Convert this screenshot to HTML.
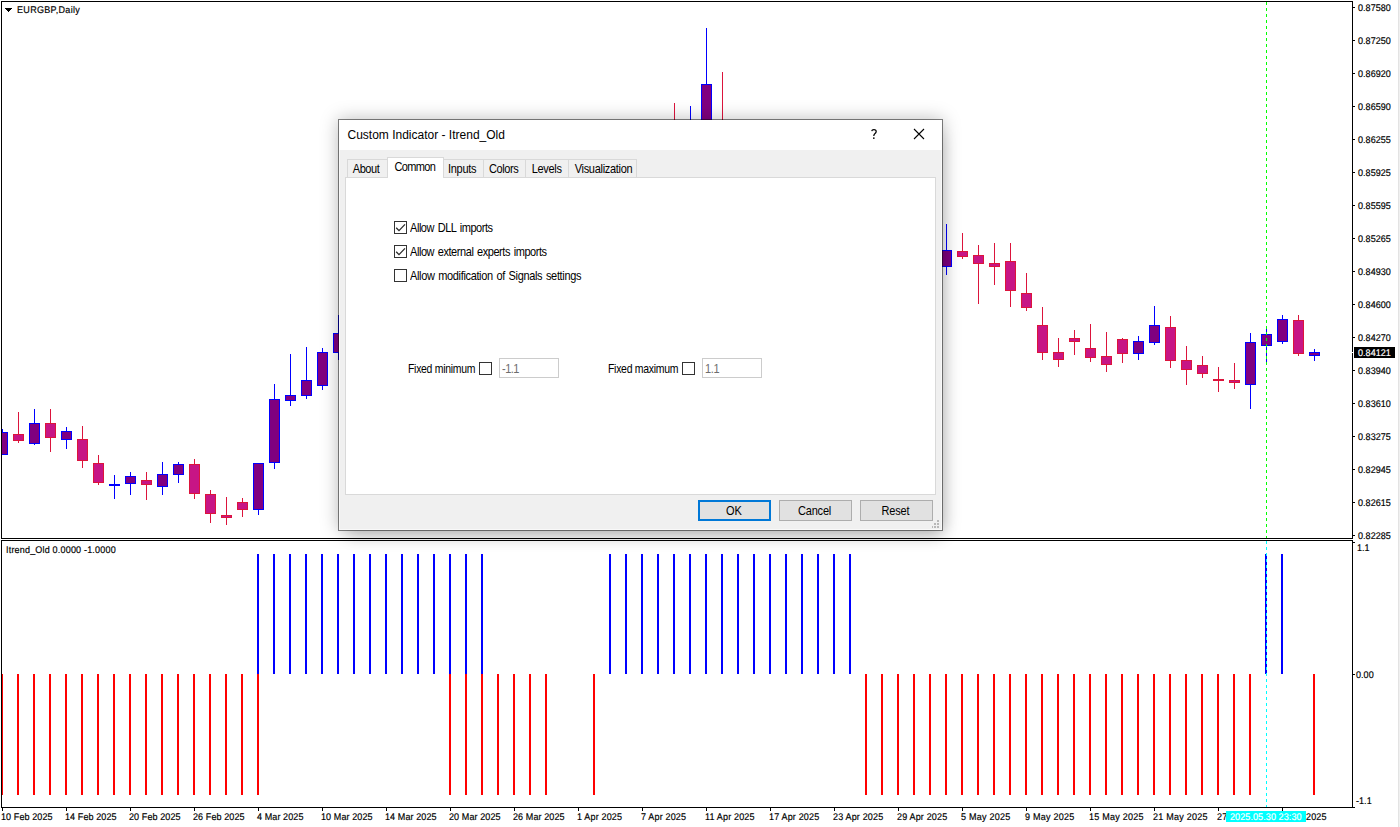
<!DOCTYPE html>
<html><head><meta charset="utf-8"><title>EURGBP,Daily</title>
<style>
html,body{margin:0;padding:0;background:#fff;}
body{width:1400px;height:827px;position:relative;overflow:hidden;font-family:"Liberation Sans",sans-serif;}
.t{position:absolute;white-space:pre;font-family:"Liberation Sans",sans-serif;}
.s{-webkit-text-stroke:0.18px currentColor;}
#chart{position:absolute;left:0;top:0;}
.abs{position:absolute;}
#dlg{position:absolute;left:338px;top:119px;width:603px;height:410px;border:1px solid rgba(0,0,0,0.48);background:#f0f0f0;background-clip:padding-box;box-shadow:0 0 17px rgba(0,0,0,0.26),5px 12px 15px -6px rgba(0,0,0,0.15);}
#dlg .title{position:absolute;left:0;top:0;width:603px;height:30px;background:#fff;}
#dlg .panel{position:absolute;left:6px;top:57px;width:589px;height:316px;border:1px solid #d9d9d9;background:#fff;}
.tab{position:absolute;top:39px;height:18px;border:1px solid #d9d9d9;border-bottom:none;background:#f0f0f0;box-sizing:border-box;}
.tab.sel{top:37px;height:21px;background:#fff;z-index:2;}
.cb{position:absolute;width:11px;height:11px;border:1px solid #333;background:#fff;}
.inp{position:absolute;width:58px;height:18px;border:1px solid #ccc;background:#fff;}
.btn{position:absolute;top:380px;width:71px;height:19px;border:1px solid #adadad;background:#e1e1e1;}
.btn.def{border:2px solid #0078d7;width:69px;height:17px;}
</style></head><body>

<svg id="chart" width="1400" height="827" viewBox="0 0 1400 827" shape-rendering="crispEdges">
<rect x="1" y="1" width="1352" height="1" fill="#000"/>
<rect x="1" y="1" width="1" height="538" fill="#000"/>
<rect x="1" y="538" width="1352" height="1" fill="#000"/>
<rect x="1" y="540" width="1352" height="1" fill="#000"/>
<rect x="1" y="540" width="1" height="268" fill="#000"/>
<rect x="1" y="807" width="1354" height="1" fill="#000"/>
<rect x="1352" y="1" width="1" height="538" fill="#000"/>
<rect x="1352" y="540" width="1" height="268" fill="#000"/>
<rect x="1398" y="0" width="1" height="827" fill="#e3e3e3"/>
<rect x="1399" y="0" width="1" height="827" fill="#f0f0f0"/>
<rect x="1353" y="7" width="2" height="1" fill="#000"/>
<rect x="1353" y="40" width="2" height="1" fill="#000"/>
<rect x="1353" y="73" width="2" height="1" fill="#000"/>
<rect x="1353" y="106" width="2" height="1" fill="#000"/>
<rect x="1353" y="139" width="2" height="1" fill="#000"/>
<rect x="1353" y="172" width="2" height="1" fill="#000"/>
<rect x="1353" y="205" width="2" height="1" fill="#000"/>
<rect x="1353" y="238" width="2" height="1" fill="#000"/>
<rect x="1353" y="271" width="2" height="1" fill="#000"/>
<rect x="1353" y="304" width="2" height="1" fill="#000"/>
<rect x="1353" y="337" width="2" height="1" fill="#000"/>
<rect x="1353" y="370" width="2" height="1" fill="#000"/>
<rect x="1353" y="403" width="2" height="1" fill="#000"/>
<rect x="1353" y="436" width="2" height="1" fill="#000"/>
<rect x="1353" y="469" width="2" height="1" fill="#000"/>
<rect x="1353" y="502" width="2" height="1" fill="#000"/>
<rect x="1353" y="535" width="2" height="1" fill="#000"/>
<rect x="1353" y="542" width="2" height="1" fill="#000"/>
<rect x="1353" y="674" width="2" height="1" fill="#000"/>
<rect x="2" y="808" width="1" height="3" fill="#000"/>
<rect x="66" y="808" width="1" height="3" fill="#000"/>
<rect x="130" y="808" width="1" height="3" fill="#000"/>
<rect x="194" y="808" width="1" height="3" fill="#000"/>
<rect x="258" y="808" width="1" height="3" fill="#000"/>
<rect x="322" y="808" width="1" height="3" fill="#000"/>
<rect x="386" y="808" width="1" height="3" fill="#000"/>
<rect x="450" y="808" width="1" height="3" fill="#000"/>
<rect x="514" y="808" width="1" height="3" fill="#000"/>
<rect x="578" y="808" width="1" height="3" fill="#000"/>
<rect x="642" y="808" width="1" height="3" fill="#000"/>
<rect x="706" y="808" width="1" height="3" fill="#000"/>
<rect x="770" y="808" width="1" height="3" fill="#000"/>
<rect x="834" y="808" width="1" height="3" fill="#000"/>
<rect x="898" y="808" width="1" height="3" fill="#000"/>
<rect x="962" y="808" width="1" height="3" fill="#000"/>
<rect x="1026" y="808" width="1" height="3" fill="#000"/>
<rect x="1090" y="808" width="1" height="3" fill="#000"/>
<rect x="1154" y="808" width="1" height="3" fill="#000"/>
<rect x="1218" y="808" width="1" height="3" fill="#000"/>
<rect x="1282" y="808" width="1" height="3" fill="#000"/>
<rect x="2" y="429" width="1" height="26" fill="#0000ff"/>
<rect x="2" y="432" width="6" height="23" fill="#0000ff"/>
<rect x="2" y="433" width="5" height="21" fill="#800080"/>
<rect x="18" y="412" width="1" height="31" fill="#dc143c"/>
<rect x="13" y="434" width="11" height="7" fill="#dc143c"/>
<rect x="14" y="435" width="9" height="5" fill="#c71585"/>
<rect x="34" y="409" width="1" height="36" fill="#0000ff"/>
<rect x="29" y="423" width="11" height="21" fill="#0000ff"/>
<rect x="30" y="424" width="9" height="19" fill="#800080"/>
<rect x="50" y="409" width="1" height="43" fill="#dc143c"/>
<rect x="45" y="423" width="11" height="15" fill="#dc143c"/>
<rect x="46" y="424" width="9" height="13" fill="#c71585"/>
<rect x="66" y="427" width="1" height="22" fill="#0000ff"/>
<rect x="61" y="431" width="11" height="9" fill="#0000ff"/>
<rect x="62" y="432" width="9" height="7" fill="#800080"/>
<rect x="82" y="426" width="1" height="42" fill="#dc143c"/>
<rect x="77" y="439" width="11" height="22" fill="#dc143c"/>
<rect x="78" y="440" width="9" height="20" fill="#c71585"/>
<rect x="98" y="455" width="1" height="30" fill="#dc143c"/>
<rect x="93" y="463" width="11" height="20" fill="#dc143c"/>
<rect x="94" y="464" width="9" height="18" fill="#c71585"/>
<rect x="114" y="475" width="1" height="24" fill="#0000ff"/>
<rect x="109" y="484" width="11" height="2" fill="#0000ff"/>
<rect x="130" y="472" width="1" height="23" fill="#0000ff"/>
<rect x="125" y="476" width="11" height="8" fill="#0000ff"/>
<rect x="126" y="477" width="9" height="6" fill="#800080"/>
<rect x="146" y="472" width="1" height="28" fill="#dc143c"/>
<rect x="141" y="480" width="11" height="5" fill="#dc143c"/>
<rect x="142" y="481" width="9" height="3" fill="#c71585"/>
<rect x="162" y="462" width="1" height="33" fill="#0000ff"/>
<rect x="157" y="474" width="11" height="13" fill="#0000ff"/>
<rect x="158" y="475" width="9" height="11" fill="#800080"/>
<rect x="178" y="462" width="1" height="21" fill="#0000ff"/>
<rect x="173" y="464" width="11" height="11" fill="#0000ff"/>
<rect x="174" y="465" width="9" height="9" fill="#800080"/>
<rect x="194" y="459" width="1" height="40" fill="#dc143c"/>
<rect x="189" y="464" width="11" height="30" fill="#dc143c"/>
<rect x="190" y="465" width="9" height="28" fill="#c71585"/>
<rect x="210" y="490" width="1" height="33" fill="#dc143c"/>
<rect x="205" y="494" width="11" height="20" fill="#dc143c"/>
<rect x="206" y="495" width="9" height="18" fill="#c71585"/>
<rect x="226" y="497" width="1" height="28" fill="#dc143c"/>
<rect x="221" y="515" width="11" height="3" fill="#dc143c"/>
<rect x="222" y="516" width="9" height="1" fill="#c71585"/>
<rect x="242" y="498" width="1" height="19" fill="#dc143c"/>
<rect x="237" y="502" width="11" height="8" fill="#dc143c"/>
<rect x="238" y="503" width="9" height="6" fill="#c71585"/>
<rect x="258" y="463" width="1" height="52" fill="#0000ff"/>
<rect x="253" y="463" width="11" height="47" fill="#0000ff"/>
<rect x="254" y="464" width="9" height="45" fill="#800080"/>
<rect x="274" y="384" width="1" height="85" fill="#0000ff"/>
<rect x="269" y="399" width="11" height="64" fill="#0000ff"/>
<rect x="270" y="400" width="9" height="62" fill="#800080"/>
<rect x="290" y="354" width="1" height="52" fill="#0000ff"/>
<rect x="285" y="395" width="11" height="6" fill="#0000ff"/>
<rect x="286" y="396" width="9" height="4" fill="#800080"/>
<rect x="306" y="347" width="1" height="52" fill="#0000ff"/>
<rect x="301" y="380" width="11" height="16" fill="#0000ff"/>
<rect x="302" y="381" width="9" height="14" fill="#800080"/>
<rect x="322" y="348" width="1" height="42" fill="#0000ff"/>
<rect x="317" y="352" width="11" height="34" fill="#0000ff"/>
<rect x="318" y="353" width="9" height="32" fill="#800080"/>
<rect x="338" y="315" width="1" height="45" fill="#0000ff"/>
<rect x="333" y="333" width="11" height="20" fill="#0000ff"/>
<rect x="334" y="334" width="9" height="18" fill="#800080"/>
<rect x="674" y="103" width="1" height="47" fill="#dc143c"/>
<rect x="669" y="125" width="11" height="15" fill="#dc143c"/>
<rect x="670" y="126" width="9" height="13" fill="#c71585"/>
<rect x="690" y="106" width="1" height="44" fill="#0000ff"/>
<rect x="685" y="125" width="11" height="15" fill="#0000ff"/>
<rect x="686" y="126" width="9" height="13" fill="#800080"/>
<rect x="706" y="28" width="1" height="122" fill="#0000ff"/>
<rect x="701" y="84" width="11" height="56" fill="#0000ff"/>
<rect x="702" y="85" width="9" height="54" fill="#800080"/>
<rect x="722" y="72" width="1" height="78" fill="#dc143c"/>
<rect x="717" y="125" width="11" height="15" fill="#dc143c"/>
<rect x="718" y="126" width="9" height="13" fill="#c71585"/>
<rect x="946" y="224" width="1" height="51" fill="#0000ff"/>
<rect x="941" y="250" width="11" height="17" fill="#0000ff"/>
<rect x="942" y="251" width="9" height="15" fill="#800080"/>
<rect x="962" y="233" width="1" height="26" fill="#dc143c"/>
<rect x="957" y="251" width="11" height="6" fill="#dc143c"/>
<rect x="958" y="252" width="9" height="4" fill="#c71585"/>
<rect x="978" y="245" width="1" height="59" fill="#dc143c"/>
<rect x="973" y="255" width="11" height="9" fill="#dc143c"/>
<rect x="974" y="256" width="9" height="7" fill="#c71585"/>
<rect x="994" y="243" width="1" height="42" fill="#dc143c"/>
<rect x="989" y="263" width="11" height="4" fill="#dc143c"/>
<rect x="990" y="264" width="9" height="2" fill="#c71585"/>
<rect x="1010" y="243" width="1" height="64" fill="#dc143c"/>
<rect x="1005" y="261" width="11" height="30" fill="#dc143c"/>
<rect x="1006" y="262" width="9" height="28" fill="#c71585"/>
<rect x="1026" y="273" width="1" height="38" fill="#dc143c"/>
<rect x="1021" y="293" width="11" height="15" fill="#dc143c"/>
<rect x="1022" y="294" width="9" height="13" fill="#c71585"/>
<rect x="1042" y="307" width="1" height="53" fill="#dc143c"/>
<rect x="1037" y="325" width="11" height="28" fill="#dc143c"/>
<rect x="1038" y="326" width="9" height="26" fill="#c71585"/>
<rect x="1058" y="338" width="1" height="29" fill="#dc143c"/>
<rect x="1053" y="352" width="11" height="8" fill="#dc143c"/>
<rect x="1054" y="353" width="9" height="6" fill="#c71585"/>
<rect x="1074" y="330" width="1" height="25" fill="#dc143c"/>
<rect x="1069" y="338" width="11" height="4" fill="#dc143c"/>
<rect x="1070" y="339" width="9" height="2" fill="#c71585"/>
<rect x="1090" y="324" width="1" height="38" fill="#dc143c"/>
<rect x="1085" y="348" width="11" height="10" fill="#dc143c"/>
<rect x="1086" y="349" width="9" height="8" fill="#c71585"/>
<rect x="1106" y="332" width="1" height="40" fill="#dc143c"/>
<rect x="1101" y="356" width="11" height="9" fill="#dc143c"/>
<rect x="1102" y="357" width="9" height="7" fill="#c71585"/>
<rect x="1122" y="338" width="1" height="25" fill="#dc143c"/>
<rect x="1117" y="339" width="11" height="15" fill="#dc143c"/>
<rect x="1118" y="340" width="9" height="13" fill="#c71585"/>
<rect x="1138" y="336" width="1" height="24" fill="#0000ff"/>
<rect x="1133" y="341" width="11" height="13" fill="#0000ff"/>
<rect x="1134" y="342" width="9" height="11" fill="#800080"/>
<rect x="1154" y="306" width="1" height="39" fill="#0000ff"/>
<rect x="1149" y="325" width="11" height="18" fill="#0000ff"/>
<rect x="1150" y="326" width="9" height="16" fill="#800080"/>
<rect x="1170" y="316" width="1" height="52" fill="#dc143c"/>
<rect x="1165" y="327" width="11" height="34" fill="#dc143c"/>
<rect x="1166" y="328" width="9" height="32" fill="#c71585"/>
<rect x="1186" y="346" width="1" height="39" fill="#dc143c"/>
<rect x="1181" y="360" width="11" height="10" fill="#dc143c"/>
<rect x="1182" y="361" width="9" height="8" fill="#c71585"/>
<rect x="1202" y="356" width="1" height="22" fill="#dc143c"/>
<rect x="1197" y="365" width="11" height="9" fill="#dc143c"/>
<rect x="1198" y="366" width="9" height="7" fill="#c71585"/>
<rect x="1218" y="367" width="1" height="25" fill="#dc143c"/>
<rect x="1213" y="379" width="11" height="2" fill="#dc143c"/>
<rect x="1234" y="363" width="1" height="26" fill="#dc143c"/>
<rect x="1229" y="380" width="11" height="3" fill="#dc143c"/>
<rect x="1230" y="381" width="9" height="1" fill="#c71585"/>
<rect x="1250" y="333" width="1" height="76" fill="#0000ff"/>
<rect x="1245" y="342" width="11" height="43" fill="#0000ff"/>
<rect x="1246" y="343" width="9" height="41" fill="#800080"/>
<rect x="1266" y="329" width="1" height="33" fill="#0000ff"/>
<rect x="1261" y="334" width="11" height="12" fill="#0000ff"/>
<rect x="1262" y="335" width="9" height="10" fill="#800080"/>
<rect x="1282" y="315" width="1" height="29" fill="#0000ff"/>
<rect x="1277" y="319" width="11" height="23" fill="#0000ff"/>
<rect x="1278" y="320" width="9" height="21" fill="#800080"/>
<rect x="1298" y="315" width="1" height="41" fill="#dc143c"/>
<rect x="1293" y="320" width="11" height="34" fill="#dc143c"/>
<rect x="1294" y="321" width="9" height="32" fill="#c71585"/>
<rect x="1314" y="349" width="1" height="12" fill="#0000ff"/>
<rect x="1309" y="352" width="11" height="4" fill="#0000ff"/>
<rect x="1310" y="353" width="9" height="2" fill="#800080"/>
<rect x="1266" y="2" width="1" height="3" fill="#00ff00"/>
<rect x="1266" y="8" width="1" height="3" fill="#00ff00"/>
<rect x="1266" y="14" width="1" height="3" fill="#00ff00"/>
<rect x="1266" y="20" width="1" height="3" fill="#00ff00"/>
<rect x="1266" y="26" width="1" height="3" fill="#00ff00"/>
<rect x="1266" y="32" width="1" height="3" fill="#00ff00"/>
<rect x="1266" y="38" width="1" height="3" fill="#00ff00"/>
<rect x="1266" y="44" width="1" height="3" fill="#00ff00"/>
<rect x="1266" y="50" width="1" height="3" fill="#00ff00"/>
<rect x="1266" y="56" width="1" height="3" fill="#00ff00"/>
<rect x="1266" y="62" width="1" height="3" fill="#00ff00"/>
<rect x="1266" y="68" width="1" height="3" fill="#00ff00"/>
<rect x="1266" y="74" width="1" height="3" fill="#00ff00"/>
<rect x="1266" y="80" width="1" height="3" fill="#00ff00"/>
<rect x="1266" y="86" width="1" height="3" fill="#00ff00"/>
<rect x="1266" y="92" width="1" height="3" fill="#00ff00"/>
<rect x="1266" y="98" width="1" height="3" fill="#00ff00"/>
<rect x="1266" y="104" width="1" height="3" fill="#00ff00"/>
<rect x="1266" y="110" width="1" height="3" fill="#00ff00"/>
<rect x="1266" y="116" width="1" height="3" fill="#00ff00"/>
<rect x="1266" y="122" width="1" height="3" fill="#00ff00"/>
<rect x="1266" y="128" width="1" height="3" fill="#00ff00"/>
<rect x="1266" y="134" width="1" height="3" fill="#00ff00"/>
<rect x="1266" y="140" width="1" height="3" fill="#00ff00"/>
<rect x="1266" y="146" width="1" height="3" fill="#00ff00"/>
<rect x="1266" y="152" width="1" height="3" fill="#00ff00"/>
<rect x="1266" y="158" width="1" height="3" fill="#00ff00"/>
<rect x="1266" y="164" width="1" height="3" fill="#00ff00"/>
<rect x="1266" y="170" width="1" height="3" fill="#00ff00"/>
<rect x="1266" y="176" width="1" height="3" fill="#00ff00"/>
<rect x="1266" y="182" width="1" height="3" fill="#00ff00"/>
<rect x="1266" y="188" width="1" height="3" fill="#00ff00"/>
<rect x="1266" y="194" width="1" height="3" fill="#00ff00"/>
<rect x="1266" y="200" width="1" height="3" fill="#00ff00"/>
<rect x="1266" y="206" width="1" height="3" fill="#00ff00"/>
<rect x="1266" y="212" width="1" height="3" fill="#00ff00"/>
<rect x="1266" y="218" width="1" height="3" fill="#00ff00"/>
<rect x="1266" y="224" width="1" height="3" fill="#00ff00"/>
<rect x="1266" y="230" width="1" height="3" fill="#00ff00"/>
<rect x="1266" y="236" width="1" height="3" fill="#00ff00"/>
<rect x="1266" y="242" width="1" height="3" fill="#00ff00"/>
<rect x="1266" y="248" width="1" height="3" fill="#00ff00"/>
<rect x="1266" y="254" width="1" height="3" fill="#00ff00"/>
<rect x="1266" y="260" width="1" height="3" fill="#00ff00"/>
<rect x="1266" y="266" width="1" height="3" fill="#00ff00"/>
<rect x="1266" y="272" width="1" height="3" fill="#00ff00"/>
<rect x="1266" y="278" width="1" height="3" fill="#00ff00"/>
<rect x="1266" y="284" width="1" height="3" fill="#00ff00"/>
<rect x="1266" y="290" width="1" height="3" fill="#00ff00"/>
<rect x="1266" y="296" width="1" height="3" fill="#00ff00"/>
<rect x="1266" y="302" width="1" height="3" fill="#00ff00"/>
<rect x="1266" y="308" width="1" height="3" fill="#00ff00"/>
<rect x="1266" y="314" width="1" height="3" fill="#00ff00"/>
<rect x="1266" y="320" width="1" height="3" fill="#00ff00"/>
<rect x="1266" y="326" width="1" height="3" fill="#00ff00"/>
<rect x="1266" y="332" width="1" height="3" fill="#00ff00"/>
<rect x="1266" y="338" width="1" height="3" fill="#00ff00"/>
<rect x="1266" y="344" width="1" height="3" fill="#00ff00"/>
<rect x="1266" y="350" width="1" height="3" fill="#00ff00"/>
<rect x="1266" y="356" width="1" height="3" fill="#00ff00"/>
<rect x="1266" y="362" width="1" height="3" fill="#00ff00"/>
<rect x="1266" y="368" width="1" height="3" fill="#00ff00"/>
<rect x="1266" y="374" width="1" height="3" fill="#00ff00"/>
<rect x="1266" y="380" width="1" height="3" fill="#00ff00"/>
<rect x="1266" y="386" width="1" height="3" fill="#00ff00"/>
<rect x="1266" y="392" width="1" height="3" fill="#00ff00"/>
<rect x="1266" y="398" width="1" height="3" fill="#00ff00"/>
<rect x="1266" y="404" width="1" height="3" fill="#00ff00"/>
<rect x="1266" y="410" width="1" height="3" fill="#00ff00"/>
<rect x="1266" y="416" width="1" height="3" fill="#00ff00"/>
<rect x="1266" y="422" width="1" height="3" fill="#00ff00"/>
<rect x="1266" y="428" width="1" height="3" fill="#00ff00"/>
<rect x="1266" y="434" width="1" height="3" fill="#00ff00"/>
<rect x="1266" y="440" width="1" height="3" fill="#00ff00"/>
<rect x="1266" y="446" width="1" height="3" fill="#00ff00"/>
<rect x="1266" y="452" width="1" height="3" fill="#00ff00"/>
<rect x="1266" y="458" width="1" height="3" fill="#00ff00"/>
<rect x="1266" y="464" width="1" height="3" fill="#00ff00"/>
<rect x="1266" y="470" width="1" height="3" fill="#00ff00"/>
<rect x="1266" y="476" width="1" height="3" fill="#00ff00"/>
<rect x="1266" y="482" width="1" height="3" fill="#00ff00"/>
<rect x="1266" y="488" width="1" height="3" fill="#00ff00"/>
<rect x="1266" y="494" width="1" height="3" fill="#00ff00"/>
<rect x="1266" y="500" width="1" height="3" fill="#00ff00"/>
<rect x="1266" y="506" width="1" height="3" fill="#00ff00"/>
<rect x="1266" y="512" width="1" height="3" fill="#00ff00"/>
<rect x="1266" y="518" width="1" height="3" fill="#00ff00"/>
<rect x="1266" y="524" width="1" height="3" fill="#00ff00"/>
<rect x="1266" y="530" width="1" height="3" fill="#00ff00"/>
<rect x="1266" y="536" width="1" height="2" fill="#00ff00"/>
<rect x="257" y="554" width="2" height="120" fill="#0000ff"/>
<rect x="273" y="554" width="2" height="120" fill="#0000ff"/>
<rect x="289" y="554" width="2" height="120" fill="#0000ff"/>
<rect x="305" y="554" width="2" height="120" fill="#0000ff"/>
<rect x="321" y="554" width="2" height="120" fill="#0000ff"/>
<rect x="337" y="554" width="2" height="120" fill="#0000ff"/>
<rect x="353" y="554" width="2" height="120" fill="#0000ff"/>
<rect x="369" y="554" width="2" height="120" fill="#0000ff"/>
<rect x="385" y="554" width="2" height="120" fill="#0000ff"/>
<rect x="401" y="554" width="2" height="120" fill="#0000ff"/>
<rect x="417" y="554" width="2" height="120" fill="#0000ff"/>
<rect x="433" y="554" width="2" height="120" fill="#0000ff"/>
<rect x="449" y="554" width="2" height="120" fill="#0000ff"/>
<rect x="465" y="554" width="2" height="120" fill="#0000ff"/>
<rect x="481" y="554" width="2" height="120" fill="#0000ff"/>
<rect x="609" y="554" width="2" height="120" fill="#0000ff"/>
<rect x="625" y="554" width="2" height="120" fill="#0000ff"/>
<rect x="641" y="554" width="2" height="120" fill="#0000ff"/>
<rect x="657" y="554" width="2" height="120" fill="#0000ff"/>
<rect x="673" y="554" width="2" height="120" fill="#0000ff"/>
<rect x="689" y="554" width="2" height="120" fill="#0000ff"/>
<rect x="705" y="554" width="2" height="120" fill="#0000ff"/>
<rect x="721" y="554" width="2" height="120" fill="#0000ff"/>
<rect x="737" y="554" width="2" height="120" fill="#0000ff"/>
<rect x="753" y="554" width="2" height="120" fill="#0000ff"/>
<rect x="769" y="554" width="2" height="120" fill="#0000ff"/>
<rect x="785" y="554" width="2" height="120" fill="#0000ff"/>
<rect x="801" y="554" width="2" height="120" fill="#0000ff"/>
<rect x="817" y="554" width="2" height="120" fill="#0000ff"/>
<rect x="833" y="554" width="2" height="120" fill="#0000ff"/>
<rect x="849" y="554" width="2" height="120" fill="#0000ff"/>
<rect x="1265" y="554" width="2" height="120" fill="#0000ff"/>
<rect x="1281" y="554" width="2" height="120" fill="#0000ff"/>
<rect x="2" y="674" width="1" height="121" fill="#ff0000"/>
<rect x="17" y="674" width="2" height="121" fill="#ff0000"/>
<rect x="33" y="674" width="2" height="121" fill="#ff0000"/>
<rect x="49" y="674" width="2" height="121" fill="#ff0000"/>
<rect x="65" y="674" width="2" height="121" fill="#ff0000"/>
<rect x="81" y="674" width="2" height="121" fill="#ff0000"/>
<rect x="97" y="674" width="2" height="121" fill="#ff0000"/>
<rect x="113" y="674" width="2" height="121" fill="#ff0000"/>
<rect x="129" y="674" width="2" height="121" fill="#ff0000"/>
<rect x="145" y="674" width="2" height="121" fill="#ff0000"/>
<rect x="161" y="674" width="2" height="121" fill="#ff0000"/>
<rect x="177" y="674" width="2" height="121" fill="#ff0000"/>
<rect x="193" y="674" width="2" height="121" fill="#ff0000"/>
<rect x="209" y="674" width="2" height="121" fill="#ff0000"/>
<rect x="225" y="674" width="2" height="121" fill="#ff0000"/>
<rect x="241" y="674" width="2" height="121" fill="#ff0000"/>
<rect x="257" y="674" width="2" height="121" fill="#ff0000"/>
<rect x="449" y="674" width="2" height="121" fill="#ff0000"/>
<rect x="465" y="674" width="2" height="121" fill="#ff0000"/>
<rect x="481" y="674" width="2" height="121" fill="#ff0000"/>
<rect x="497" y="674" width="2" height="121" fill="#ff0000"/>
<rect x="513" y="674" width="2" height="121" fill="#ff0000"/>
<rect x="529" y="674" width="2" height="121" fill="#ff0000"/>
<rect x="545" y="674" width="2" height="121" fill="#ff0000"/>
<rect x="593" y="674" width="2" height="121" fill="#ff0000"/>
<rect x="865" y="674" width="2" height="121" fill="#ff0000"/>
<rect x="881" y="674" width="2" height="121" fill="#ff0000"/>
<rect x="897" y="674" width="2" height="121" fill="#ff0000"/>
<rect x="913" y="674" width="2" height="121" fill="#ff0000"/>
<rect x="929" y="674" width="2" height="121" fill="#ff0000"/>
<rect x="945" y="674" width="2" height="121" fill="#ff0000"/>
<rect x="961" y="674" width="2" height="121" fill="#ff0000"/>
<rect x="977" y="674" width="2" height="121" fill="#ff0000"/>
<rect x="993" y="674" width="2" height="121" fill="#ff0000"/>
<rect x="1009" y="674" width="2" height="121" fill="#ff0000"/>
<rect x="1025" y="674" width="2" height="121" fill="#ff0000"/>
<rect x="1041" y="674" width="2" height="121" fill="#ff0000"/>
<rect x="1057" y="674" width="2" height="121" fill="#ff0000"/>
<rect x="1073" y="674" width="2" height="121" fill="#ff0000"/>
<rect x="1089" y="674" width="2" height="121" fill="#ff0000"/>
<rect x="1105" y="674" width="2" height="121" fill="#ff0000"/>
<rect x="1121" y="674" width="2" height="121" fill="#ff0000"/>
<rect x="1137" y="674" width="2" height="121" fill="#ff0000"/>
<rect x="1153" y="674" width="2" height="121" fill="#ff0000"/>
<rect x="1169" y="674" width="2" height="121" fill="#ff0000"/>
<rect x="1185" y="674" width="2" height="121" fill="#ff0000"/>
<rect x="1201" y="674" width="2" height="121" fill="#ff0000"/>
<rect x="1217" y="674" width="2" height="121" fill="#ff0000"/>
<rect x="1233" y="674" width="2" height="121" fill="#ff0000"/>
<rect x="1249" y="674" width="2" height="121" fill="#ff0000"/>
<rect x="1313" y="674" width="2" height="121" fill="#ff0000"/>
<rect x="1266" y="541" width="1" height="3" fill="#00ffff"/>
<rect x="1266" y="547" width="1" height="3" fill="#00ffff"/>
<rect x="1266" y="553" width="1" height="3" fill="#00ffff"/>
<rect x="1266" y="559" width="1" height="3" fill="#00ffff"/>
<rect x="1266" y="565" width="1" height="3" fill="#00ffff"/>
<rect x="1266" y="571" width="1" height="3" fill="#00ffff"/>
<rect x="1266" y="577" width="1" height="3" fill="#00ffff"/>
<rect x="1266" y="583" width="1" height="3" fill="#00ffff"/>
<rect x="1266" y="589" width="1" height="3" fill="#00ffff"/>
<rect x="1266" y="595" width="1" height="3" fill="#00ffff"/>
<rect x="1266" y="601" width="1" height="3" fill="#00ffff"/>
<rect x="1266" y="607" width="1" height="3" fill="#00ffff"/>
<rect x="1266" y="613" width="1" height="3" fill="#00ffff"/>
<rect x="1266" y="619" width="1" height="3" fill="#00ffff"/>
<rect x="1266" y="625" width="1" height="3" fill="#00ffff"/>
<rect x="1266" y="631" width="1" height="3" fill="#00ffff"/>
<rect x="1266" y="637" width="1" height="3" fill="#00ffff"/>
<rect x="1266" y="643" width="1" height="3" fill="#00ffff"/>
<rect x="1266" y="649" width="1" height="3" fill="#00ffff"/>
<rect x="1266" y="655" width="1" height="3" fill="#00ffff"/>
<rect x="1266" y="661" width="1" height="3" fill="#00ffff"/>
<rect x="1266" y="667" width="1" height="3" fill="#00ffff"/>
<rect x="1266" y="673" width="1" height="3" fill="#00ffff"/>
<rect x="1266" y="679" width="1" height="3" fill="#00ffff"/>
<rect x="1266" y="685" width="1" height="3" fill="#00ffff"/>
<rect x="1266" y="691" width="1" height="3" fill="#00ffff"/>
<rect x="1266" y="697" width="1" height="3" fill="#00ffff"/>
<rect x="1266" y="703" width="1" height="3" fill="#00ffff"/>
<rect x="1266" y="709" width="1" height="3" fill="#00ffff"/>
<rect x="1266" y="715" width="1" height="3" fill="#00ffff"/>
<rect x="1266" y="721" width="1" height="3" fill="#00ffff"/>
<rect x="1266" y="727" width="1" height="3" fill="#00ffff"/>
<rect x="1266" y="733" width="1" height="3" fill="#00ffff"/>
<rect x="1266" y="739" width="1" height="3" fill="#00ffff"/>
<rect x="1266" y="745" width="1" height="3" fill="#00ffff"/>
<rect x="1266" y="751" width="1" height="3" fill="#00ffff"/>
<rect x="1266" y="757" width="1" height="3" fill="#00ffff"/>
<rect x="1266" y="763" width="1" height="3" fill="#00ffff"/>
<rect x="1266" y="769" width="1" height="3" fill="#00ffff"/>
<rect x="1266" y="775" width="1" height="3" fill="#00ffff"/>
<rect x="1266" y="781" width="1" height="3" fill="#00ffff"/>
<rect x="1266" y="787" width="1" height="3" fill="#00ffff"/>
<rect x="1266" y="793" width="1" height="3" fill="#00ffff"/>
<rect x="1266" y="799" width="1" height="3" fill="#00ffff"/>
<rect x="1266" y="805" width="1" height="2" fill="#00ffff"/>
<rect x="5" y="8" width="7" height="1" fill="#000"/>
<rect x="6" y="9" width="5" height="1" fill="#000"/>
<rect x="7" y="10" width="3" height="1" fill="#000"/>
<rect x="8" y="11" width="1" height="1" fill="#000"/>
</svg>
<div class="abs" style="left:1354px;top:347px;width:41px;height:11px;background:#000"></div>
<div class="abs" style="left:1352px;top:352px;width:2px;height:1px;background:#fff"></div>
<span id="sym" class="t s" style="left:16.90px;top:6.00px;font-size:9.7px;line-height:10px;color:#000;letter-spacing:0.33px;transform:scaleX(0.93);transform-origin:0 0;text-rendering:geometricPrecision;">EURGBP,Daily</span>
<span id="p0" class="t s" style="left:1358.00px;top:4.00px;font-size:9.7px;line-height:10px;color:#000;letter-spacing:0.05px;transform:scaleX(0.93);transform-origin:0 0;text-rendering:geometricPrecision;">0.87580</span>
<span id="p1" class="t s" style="left:1358.00px;top:37.00px;font-size:9.7px;line-height:10px;color:#000;letter-spacing:0.05px;transform:scaleX(0.93);transform-origin:0 0;text-rendering:geometricPrecision;">0.87250</span>
<span id="p2" class="t s" style="left:1358.00px;top:70.00px;font-size:9.7px;line-height:10px;color:#000;letter-spacing:0.05px;transform:scaleX(0.93);transform-origin:0 0;text-rendering:geometricPrecision;">0.86920</span>
<span id="p3" class="t s" style="left:1358.00px;top:103.00px;font-size:9.7px;line-height:10px;color:#000;letter-spacing:0.05px;transform:scaleX(0.93);transform-origin:0 0;text-rendering:geometricPrecision;">0.86590</span>
<span id="p4" class="t s" style="left:1358.00px;top:136.00px;font-size:9.7px;line-height:10px;color:#000;letter-spacing:0.05px;transform:scaleX(0.93);transform-origin:0 0;text-rendering:geometricPrecision;">0.86255</span>
<span id="p5" class="t s" style="left:1358.00px;top:169.00px;font-size:9.7px;line-height:10px;color:#000;letter-spacing:0.05px;transform:scaleX(0.93);transform-origin:0 0;text-rendering:geometricPrecision;">0.85925</span>
<span id="p6" class="t s" style="left:1358.00px;top:202.00px;font-size:9.7px;line-height:10px;color:#000;letter-spacing:0.05px;transform:scaleX(0.93);transform-origin:0 0;text-rendering:geometricPrecision;">0.85595</span>
<span id="p7" class="t s" style="left:1358.00px;top:235.00px;font-size:9.7px;line-height:10px;color:#000;letter-spacing:0.05px;transform:scaleX(0.93);transform-origin:0 0;text-rendering:geometricPrecision;">0.85265</span>
<span id="p8" class="t s" style="left:1358.00px;top:268.00px;font-size:9.7px;line-height:10px;color:#000;letter-spacing:0.05px;transform:scaleX(0.93);transform-origin:0 0;text-rendering:geometricPrecision;">0.84930</span>
<span id="p9" class="t s" style="left:1358.00px;top:301.00px;font-size:9.7px;line-height:10px;color:#000;letter-spacing:0.05px;transform:scaleX(0.93);transform-origin:0 0;text-rendering:geometricPrecision;">0.84600</span>
<span id="p10" class="t s" style="left:1358.00px;top:334.00px;font-size:9.7px;line-height:10px;color:#000;letter-spacing:0.05px;transform:scaleX(0.93);transform-origin:0 0;text-rendering:geometricPrecision;">0.84270</span>
<span id="p11" class="t s" style="left:1358.00px;top:367.00px;font-size:9.7px;line-height:10px;color:#000;letter-spacing:0.05px;transform:scaleX(0.93);transform-origin:0 0;text-rendering:geometricPrecision;">0.83940</span>
<span id="p12" class="t s" style="left:1358.00px;top:400.00px;font-size:9.7px;line-height:10px;color:#000;letter-spacing:0.05px;transform:scaleX(0.93);transform-origin:0 0;text-rendering:geometricPrecision;">0.83610</span>
<span id="p13" class="t s" style="left:1358.00px;top:433.00px;font-size:9.7px;line-height:10px;color:#000;letter-spacing:0.05px;transform:scaleX(0.93);transform-origin:0 0;text-rendering:geometricPrecision;">0.83275</span>
<span id="p14" class="t s" style="left:1358.00px;top:466.00px;font-size:9.7px;line-height:10px;color:#000;letter-spacing:0.05px;transform:scaleX(0.93);transform-origin:0 0;text-rendering:geometricPrecision;">0.82945</span>
<span id="p15" class="t s" style="left:1358.00px;top:499.00px;font-size:9.7px;line-height:10px;color:#000;letter-spacing:0.05px;transform:scaleX(0.93);transform-origin:0 0;text-rendering:geometricPrecision;">0.82615</span>
<span id="p16" class="t s" style="left:1358.00px;top:532.00px;font-size:9.7px;line-height:10px;color:#000;letter-spacing:0.05px;transform:scaleX(0.93);transform-origin:0 0;text-rendering:geometricPrecision;">0.82285</span>
<span id="ind" class="t s" style="left:6.00px;top:546.00px;font-size:9.7px;line-height:10px;color:#000;letter-spacing:0.2px;transform:scaleX(0.93);transform-origin:0 0;text-rendering:geometricPrecision;">Itrend_Old 0.0000 -1.0000</span>
<span id="a1" class="t s" style="left:1356.50px;top:544.00px;font-size:9.7px;line-height:10px;color:#000;letter-spacing:0.05px;transform:scaleX(0.93);transform-origin:0 0;text-rendering:geometricPrecision;">1.1</span>
<span id="a2" class="t s" style="left:1356.00px;top:671.00px;font-size:9.7px;line-height:10px;color:#000;letter-spacing:0.05px;transform:scaleX(0.93);transform-origin:0 0;text-rendering:geometricPrecision;">0.00</span>
<span id="a3" class="t s" style="left:1356.00px;top:797.00px;font-size:9.7px;line-height:10px;color:#000;letter-spacing:0.05px;transform:scaleX(0.93);transform-origin:0 0;text-rendering:geometricPrecision;">-1.1</span>
<span id="d0" class="t s" style="left:1.20px;top:813.00px;font-size:9.7px;line-height:10px;color:#000;letter-spacing:0.1px;transform:scaleX(0.93);transform-origin:0 0;text-rendering:geometricPrecision;">10 Feb 2025</span>
<span id="d1" class="t s" style="left:65.20px;top:813.00px;font-size:9.7px;line-height:10px;color:#000;letter-spacing:0.1px;transform:scaleX(0.93);transform-origin:0 0;text-rendering:geometricPrecision;">14 Feb 2025</span>
<span id="d2" class="t s" style="left:129.20px;top:813.00px;font-size:9.7px;line-height:10px;color:#000;letter-spacing:0.1px;transform:scaleX(0.93);transform-origin:0 0;text-rendering:geometricPrecision;">20 Feb 2025</span>
<span id="d3" class="t s" style="left:193.20px;top:813.00px;font-size:9.7px;line-height:10px;color:#000;letter-spacing:0.1px;transform:scaleX(0.93);transform-origin:0 0;text-rendering:geometricPrecision;">26 Feb 2025</span>
<span id="d4" class="t s" style="left:257.20px;top:813.00px;font-size:9.7px;line-height:10px;color:#000;letter-spacing:0.1px;transform:scaleX(0.93);transform-origin:0 0;text-rendering:geometricPrecision;">4 Mar 2025</span>
<span id="d5" class="t s" style="left:321.20px;top:813.00px;font-size:9.7px;line-height:10px;color:#000;letter-spacing:0.1px;transform:scaleX(0.93);transform-origin:0 0;text-rendering:geometricPrecision;">10 Mar 2025</span>
<span id="d6" class="t s" style="left:385.20px;top:813.00px;font-size:9.7px;line-height:10px;color:#000;letter-spacing:0.1px;transform:scaleX(0.93);transform-origin:0 0;text-rendering:geometricPrecision;">14 Mar 2025</span>
<span id="d7" class="t s" style="left:449.20px;top:813.00px;font-size:9.7px;line-height:10px;color:#000;letter-spacing:0.1px;transform:scaleX(0.93);transform-origin:0 0;text-rendering:geometricPrecision;">20 Mar 2025</span>
<span id="d8" class="t s" style="left:513.20px;top:813.00px;font-size:9.7px;line-height:10px;color:#000;letter-spacing:0.1px;transform:scaleX(0.93);transform-origin:0 0;text-rendering:geometricPrecision;">26 Mar 2025</span>
<span id="d9" class="t s" style="left:577.20px;top:813.00px;font-size:9.7px;line-height:10px;color:#000;letter-spacing:0.17px;transform:scaleX(0.93);transform-origin:0 0;text-rendering:geometricPrecision;">1 Apr 2025</span>
<span id="d10" class="t s" style="left:641.20px;top:813.00px;font-size:9.7px;line-height:10px;color:#000;letter-spacing:0.17px;transform:scaleX(0.93);transform-origin:0 0;text-rendering:geometricPrecision;">7 Apr 2025</span>
<span id="d11" class="t s" style="left:705.20px;top:813.00px;font-size:9.7px;line-height:10px;color:#000;letter-spacing:0.17px;transform:scaleX(0.93);transform-origin:0 0;text-rendering:geometricPrecision;">11 Apr 2025</span>
<span id="d12" class="t s" style="left:769.20px;top:813.00px;font-size:9.7px;line-height:10px;color:#000;letter-spacing:0.17px;transform:scaleX(0.93);transform-origin:0 0;text-rendering:geometricPrecision;">17 Apr 2025</span>
<span id="d13" class="t s" style="left:833.20px;top:813.00px;font-size:9.7px;line-height:10px;color:#000;letter-spacing:0.17px;transform:scaleX(0.93);transform-origin:0 0;text-rendering:geometricPrecision;">23 Apr 2025</span>
<span id="d14" class="t s" style="left:897.20px;top:813.00px;font-size:9.7px;line-height:10px;color:#000;letter-spacing:0.17px;transform:scaleX(0.93);transform-origin:0 0;text-rendering:geometricPrecision;">29 Apr 2025</span>
<span id="d15" class="t s" style="left:961.20px;top:813.00px;font-size:9.7px;line-height:10px;color:#000;letter-spacing:0.25px;transform:scaleX(0.93);transform-origin:0 0;text-rendering:geometricPrecision;">5 May 2025</span>
<span id="d16" class="t s" style="left:1025.20px;top:813.00px;font-size:9.7px;line-height:10px;color:#000;letter-spacing:0.25px;transform:scaleX(0.93);transform-origin:0 0;text-rendering:geometricPrecision;">9 May 2025</span>
<span id="d17" class="t s" style="left:1089.20px;top:813.00px;font-size:9.7px;line-height:10px;color:#000;letter-spacing:0.25px;transform:scaleX(0.93);transform-origin:0 0;text-rendering:geometricPrecision;">15 May 2025</span>
<span id="d18" class="t s" style="left:1153.20px;top:813.00px;font-size:9.7px;line-height:10px;color:#000;letter-spacing:0.25px;transform:scaleX(0.93);transform-origin:0 0;text-rendering:geometricPrecision;">21 May 2025</span>
<span id="d19" class="t s" style="left:1217.20px;top:813.00px;font-size:9.7px;line-height:10px;color:#000;letter-spacing:0.25px;transform:scaleX(0.93);transform-origin:0 0;text-rendering:geometricPrecision;">27 May 2025</span>
<span id="d20" class="t s" style="left:1281.20px;top:813.00px;font-size:9.7px;line-height:10px;color:#000;letter-spacing:0.1px;transform:scaleX(0.93);transform-origin:0 0;text-rendering:geometricPrecision;">2 Jun 2025</span>
<div class="abs" style="left:1226px;top:811px;width:80px;height:11px;background:#00ffff"></div>
<span id="cur" class="t s" style="left:1358.00px;top:349.00px;font-size:9.7px;line-height:10px;color:#fff;letter-spacing:0.05px;transform:scaleX(0.93);transform-origin:0 0;text-rendering:geometricPrecision;">0.84121</span>
<span id="tm" class="t s" style="left:1229.50px;top:813.00px;font-size:9.7px;line-height:10px;color:#fff;letter-spacing:0.1px;transform:scaleX(0.93);transform-origin:0 0;text-rendering:geometricPrecision;">2025.05.30 23:30</span>
<div id="dlg"><div class="abs" style="left:0;top:30px;width:601px;height:379px;border:1px solid #f9f9f9;border-top:none"></div><div class="title"></div>
<svg class="abs" style="left:531px;top:8px" width="9" height="12" viewBox="0 0 9 12"><path d="M1.7 3.1 C1.9 2.0 2.9 1.5 3.9 1.5 C5.3 1.5 6.2 2.3 6.2 3.5 C6.2 4.6 5.6 5.1 4.8 5.7 C4.1 6.3 3.8 6.8 3.8 8.0" stroke="#000" stroke-width="1.25" fill="none"/><rect x="3.05" y="9.4" width="1.5" height="1.5" fill="#000"/></svg>
<svg class="abs" style="left:574px;top:8px" width="12" height="12" viewBox="0 0 12 12"><path d="M1 1 L11 11 M11 1 L1 11" stroke="#000" stroke-width="1.1" fill="none"/></svg>
<div class="tab" style="left:8px;width:41px"></div>
<div class="tab sel" style="left:48px;width:57px"></div>
<div class="tab" style="left:104px;width:41px"></div>
<div class="tab" style="left:144px;width:43px"></div>
<div class="tab" style="left:186px;width:44px"></div>
<div class="tab" style="left:229px;width:69px"></div>
<div class="panel"></div>
<div class="cb" style="left:55px;top:101px"><svg class="abs" style="left:0;top:0" width="11" height="11" viewBox="0 0 11 11"><path d="M1.2 5.8 L4 8.6 L10 2.4" stroke="#2a2a2a" stroke-width="1.3" fill="none"/></svg></div>
<div class="cb" style="left:55px;top:125px"><svg class="abs" style="left:0;top:0" width="11" height="11" viewBox="0 0 11 11"><path d="M1.2 5.8 L4 8.6 L10 2.4" stroke="#2a2a2a" stroke-width="1.3" fill="none"/></svg></div>
<div class="cb" style="left:55px;top:149px"></div>
<div class="cb" style="left:140px;top:242px"></div>
<div class="inp" style="left:160px;top:238px"></div>
<div class="cb" style="left:343px;top:242px"></div>
<div class="inp" style="left:363px;top:238px"></div>
<div class="btn def" style="left:359px"></div>
<div class="btn" style="left:440px"></div>
<div class="btn" style="left:521px"></div>
<div class="abs" style="left:598px;top:400px;width:2px;height:2px;background:#b8b8b8"></div><div class="abs" style="left:595px;top:403px;width:2px;height:2px;background:#b8b8b8"></div><div class="abs" style="left:598px;top:403px;width:2px;height:2px;background:#b8b8b8"></div><div class="abs" style="left:593px;top:406px;width:1px;height:2px;background:#b8b8b8"></div><div class="abs" style="left:595px;top:406px;width:2px;height:2px;background:#b8b8b8"></div><div class="abs" style="left:598px;top:406px;width:2px;height:2px;background:#b8b8b8"></div>
<span id="ttl" class="t" style="left:8.50px;top:8.84px;font-size:12px;line-height:12px;color:#000;letter-spacing:0.0px;">Custom Indicator - Itrend_Old</span>
<span id="tab0" class="t" style="left:13.80px;top:43.69px;font-size:11px;line-height:11px;color:#000;letter-spacing:-0.45px;z-index:3;transform:scale(1,1.1);transform-origin:0 0.8465em;">About</span>
<span id="tab1" class="t" style="left:55.40px;top:41.69px;font-size:11px;line-height:11px;color:#000;letter-spacing:-0.65px;z-index:3;transform:scale(1,1.1);transform-origin:0 0.8465em;">Common</span>
<span id="tab2" class="t" style="left:109.00px;top:43.69px;font-size:11px;line-height:11px;color:#000;letter-spacing:-0.3px;z-index:3;transform:scale(1,1.1);transform-origin:0 0.8465em;">Inputs</span>
<span id="tab3" class="t" style="left:150.00px;top:43.69px;font-size:11px;line-height:11px;color:#000;letter-spacing:-0.4px;z-index:3;transform:scale(1,1.1);transform-origin:0 0.8465em;">Colors</span>
<span id="tab4" class="t" style="left:192.70px;top:43.69px;font-size:11px;line-height:11px;color:#000;letter-spacing:-0.3px;z-index:3;transform:scale(1,1.1);transform-origin:0 0.8465em;">Levels</span>
<span id="tab5" class="t" style="left:235.70px;top:43.69px;font-size:11px;line-height:11px;color:#000;letter-spacing:-0.3px;z-index:3;transform:scale(1,1.1);transform-origin:0 0.8465em;">Visualization</span>
<span id="c0" class="t" style="left:71.00px;top:102.69px;font-size:11px;line-height:11px;color:#000;letter-spacing:-0.45px;word-spacing:1px;transform:scale(1,1.1);transform-origin:0 0.8465em;">Allow DLL imports</span>
<span id="c1" class="t" style="left:71.00px;top:126.69px;font-size:11px;line-height:11px;color:#000;letter-spacing:-0.435px;word-spacing:1px;transform:scale(1,1.1);transform-origin:0 0.8465em;">Allow external experts imports</span>
<span id="c2" class="t" style="left:71.00px;top:150.69px;font-size:11px;line-height:11px;color:#000;letter-spacing:-0.35px;word-spacing:1px;transform:scale(1,1.1);transform-origin:0 0.8465em;">Allow modification of Signals settings</span>
<span id="fmin" class="t" style="left:68.60px;top:243.69px;font-size:11px;line-height:11px;color:#000;letter-spacing:-0.3px;transform:scale(0.95,1.1);transform-origin:0 0.8465em;">Fixed minimum</span>
<span id="vmin" class="t" style="left:163.00px;top:243.69px;font-size:11px;line-height:11px;color:#6d6d6d;letter-spacing:-0.5px;transform:scale(1,1.1);transform-origin:0 0.8465em;">-1.1</span>
<span id="fmax" class="t" style="left:268.60px;top:243.69px;font-size:11px;line-height:11px;color:#000;letter-spacing:-0.3px;transform:scale(0.953,1.1);transform-origin:0 0.8465em;">Fixed maximum</span>
<span id="vmax" class="t" style="left:366.00px;top:243.69px;font-size:11px;line-height:11px;color:#6d6d6d;letter-spacing:-0.3px;transform:scale(1,1.1);transform-origin:0 0.8465em;">1.1</span>
<span id="bok" class="t" style="left:387.00px;top:385.69px;font-size:11px;line-height:11px;color:#000;letter-spacing:0px;transform:scale(1,1.1);transform-origin:0 0.8465em;">OK</span>
<span id="bcan" class="t" style="left:459.00px;top:385.69px;font-size:11px;line-height:11px;color:#000;letter-spacing:-0.2px;transform:scale(1,1.1);transform-origin:0 0.8465em;">Cancel</span>
<span id="bres" class="t" style="left:542.50px;top:385.69px;font-size:11px;line-height:11px;color:#000;letter-spacing:-0.2px;transform:scale(1,1.1);transform-origin:0 0.8465em;">Reset</span>
</div>
</body></html>
